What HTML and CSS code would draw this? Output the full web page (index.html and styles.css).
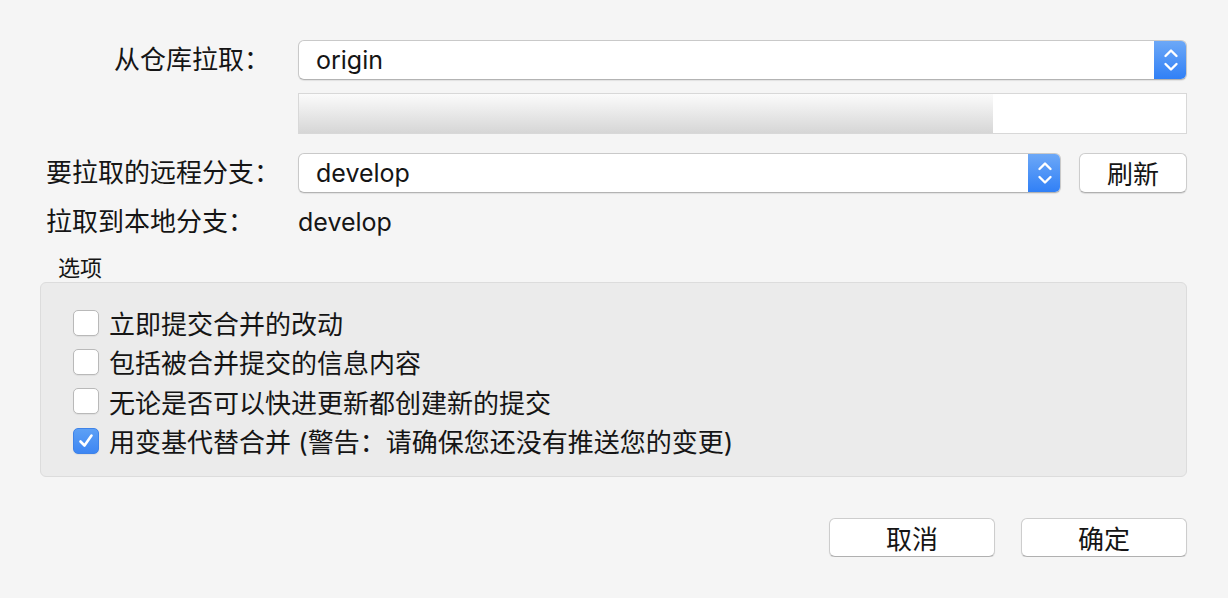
FILE: index.html
```html
<!DOCTYPE html>
<html lang="zh-CN">
<head>
<meta charset="utf-8">
<link rel="stylesheet" href="styles.css">
</head>
<body>
<div class="dialog">
  <div class="form">
    <div class="row">
      <div class="label right">从仓库拉取：</div>
      <div class="select">
        <span class="select-text">origin</span>
        <span class="stepper"><svg width="16" height="26" viewBox="0 0 16 26"><path d="M2.5 9 L8 3.5 L13.5 9 M2.5 17 L8 22.5 L13.5 17" fill="none" stroke="#fff" stroke-width="2.4" stroke-linecap="round" stroke-linejoin="round"/></svg></span>
      </div>
    </div>
    <div class="row progress-row">
      <div></div>
      <div class="progress"><div class="progress-fill" style="width:78.2%"></div></div>
    </div>
    <div class="row row-branch">
      <div class="label right">要拉取的远程分支：</div>
      <div class="branch-controls">
        <div class="select">
          <span class="select-text">develop</span>
          <span class="stepper"><svg width="16" height="26" viewBox="0 0 16 26"><path d="M2.5 9 L8 3.5 L13.5 9 M2.5 17 L8 22.5 L13.5 17" fill="none" stroke="#fff" stroke-width="2.4" stroke-linecap="round" stroke-linejoin="round"/></svg></span>
        </div>
        <button class="btn btn-refresh">刷新</button>
      </div>
    </div>
    <div class="row row-local">
      <div class="label">拉取到本地分支：</div>
      <div class="value">develop</div>
    </div>
  </div>
  <div class="section-title">选项</div>
  <div class="options">
    <label class="option"><span class="checkbox"></span><span>立即提交合并的改动</span></label>
    <label class="option"><span class="checkbox"></span><span>包括被合并提交的信息内容</span></label>
    <label class="option"><span class="checkbox"></span><span>无论是否可以快进更新都创建新的提交</span></label>
    <label class="option"><span class="checkbox checked"><svg width="18" height="18" viewBox="0 0 18 18"><path d="M3.5 9.5 L7.5 13.5 L14.5 3.5" fill="none" stroke="#fff" stroke-width="2.6" stroke-linecap="round" stroke-linejoin="round"/></svg></span><span>用变基代替合并 (警告：请确保您还没有推送您的变更)</span></label>
  </div>
  <div class="actions">
    <button class="btn btn-action">取消</button>
    <button class="btn btn-action">确定</button>
  </div>
</div>
</body>
</html>
```
FILE: styles.css
```css
html, body {
  margin: 0;
  padding: 0;
  background: #f5f5f5;
}
body {
  font-family: "Inter", "Noto Sans CJK SC", sans-serif;
  color: #151515;
  font-size: 26px;
}
.dialog {
  padding: 40px 41px 0 40px;
}
.form {
  padding-left: 6px;
}
.row {
  display: grid;
  grid-template-columns: 224px 1fr;
  column-gap: 28px;
  align-items: center;
}
.label {
  white-space: nowrap;
  line-height: 30px;
}
.label.right {
  text-align: right;
}
.select {
  flex: 1;
  height: 38px;
  background: #fff;
  border: 1px solid #c9c9c9;
  border-bottom-color: #b3b3b3;
  border-radius: 6px;
  box-shadow: 0 1px 1px rgba(0,0,0,0.08);
  display: flex;
  align-items: center;
  overflow: hidden;
}
.select-text {
  flex: 1;
  padding-left: 17px;
  line-height: 38px;
  font-size: 25px;
}
.stepper {
  width: 33px;
  height: 40px;
  margin-right: -1px;
  background: linear-gradient(#6ea9f7, #2f7ff6);
  display: flex;
  align-items: center;
  justify-content: center;
}
.progress-row {
  margin-top: 13px;
}
.progress {
  height: 39px;
  background: #fff;
  border: 1px solid #d8d8d8;
}
.progress-fill {
  height: 100%;
  background: linear-gradient(#fbfbfb, #d6d6d6);
}
.row-branch {
  margin-top: 19px;
}
.branch-controls {
  display: flex;
  gap: 18px;
  align-items: center;
}
.btn {
  font-family: "Noto Sans CJK SC", sans-serif;
  font-size: 26px;
  color: #151515;
  background: #fff;
  border: 1px solid #cdcdcd;
  border-bottom-color: #b0b0b0;
  border-radius: 6px;
  box-shadow: 0 1px 1px rgba(0,0,0,0.1);
  height: 40px;
  padding: 0;
  line-height: 38px;
}
.btn-refresh {
  width: 108px;
}
.row-local {
  margin-top: 14px;
}
.value {
  line-height: 30px;
  font-size: 25px;
}
.section-title {
  font-size: 22px;
  line-height: 26px;
  margin-top: 18px;
  padding-left: 18px;
}
.options {
  margin-top: 1px;
  background: #ebebeb;
  border: 1px solid #dcdcdc;
  border-radius: 6px;
  padding: 20px 32px 16px;
}
.option {
  display: flex;
  align-items: center;
  gap: 10px;
  height: 39.3px;
  white-space: nowrap;
}
.checkbox {
  width: 26px;
  height: 26px;
  box-sizing: border-box;
  background: #fff;
  border: 1px solid #b9b9b9;
  border-radius: 5px;
  box-shadow: 0 1px 1px rgba(0,0,0,0.06);
  display: flex;
  align-items: center;
  justify-content: center;
  flex: none;
}
.checkbox.checked {
  background: linear-gradient(#5da0f5, #3d86f3);
  border-color: #3f83e8;
}
.actions {
  display: flex;
  justify-content: flex-end;
  gap: 26px;
  margin-top: 41px;
}
.btn-action {
  width: 166px;
  height: 39px;
}
```
